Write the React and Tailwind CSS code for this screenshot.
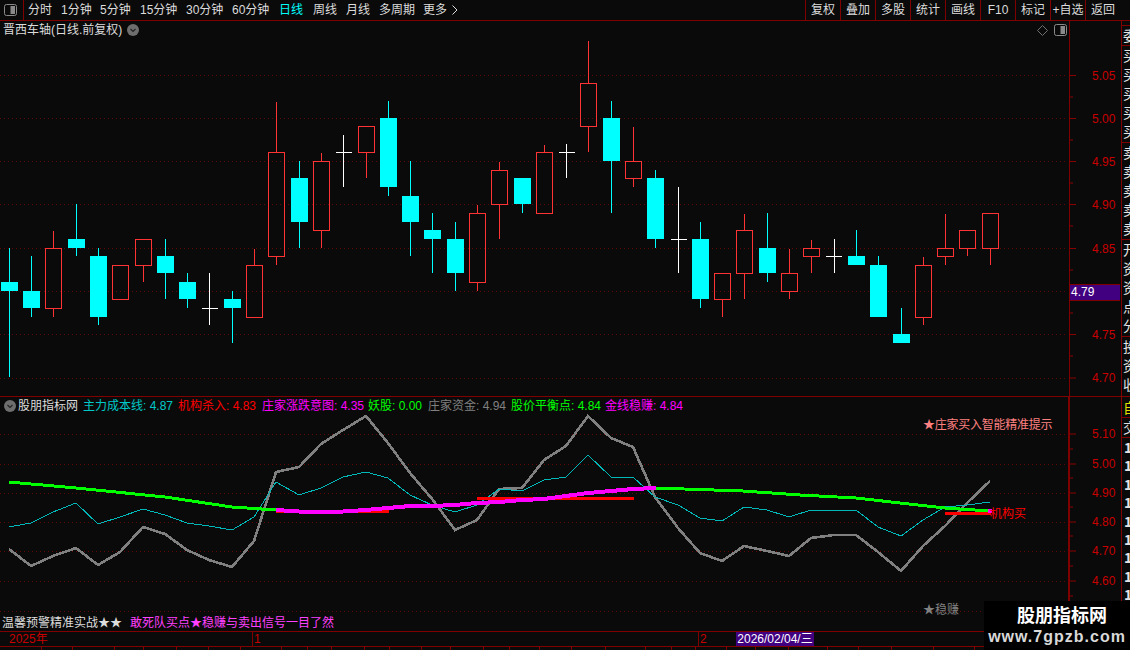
import React from "react";

const RED = "#ff3333";
const CY = "#00ffff";
const candles = [
  [9.5,248,282,291,377,"c"],[31.5,256,291,308,317,"c"],[53.5,231,248.5,308.5,317,"r"],[76.5,204,239,248,256,"c"],
  [98.5,248,256,317,325,"c"],[120.5,265,265.5,299.5,299,"r"],[143.5,239,239.5,265.5,282,"r"],[165.5,239,256,273,299,"c"],
  [187.5,273,282,299,308,"c"],[209.5,273,308,308,325,"w"],[232.5,291,299,308,343,"c"],[254.5,249,265.5,317.5,317,"r"],
  [276.5,102,152.5,256.5,265,"r"],[299.5,161,178,222,248,"c"],[321.5,153,161.5,230.5,248,"r"],[343.5,135,152,152,187,"w"],
  [366.5,126,126.5,152.5,178,"r"],[388.5,101,118,187,196,"c"],[410.5,161,196,222,256,"c"],[432.5,213,230,239,273,"c"],
  [455.5,222,239,273,291,"c"],[477.5,205,213.5,282.5,291,"r"],[499.5,162,170.5,204.5,239,"r"],[522.5,178,178,204,213,"c"],
  [544.5,145,152.5,213.5,213,"r"],[566.5,144,152,152,178,"w"],[588.5,41,83.5,126.5,152,"r"],[611.5,101,118,161,213,"c"],
  [633.5,127,161.5,178.5,187,"r"],[655.5,170,178,239,248,"c"],[678.5,187,239,239,273,"w"],[700.5,222,239,299,308,"c"],
  [722.5,273,273.5,299.5,317,"r"],[744.5,214,230.5,273.5,299,"r"],[767.5,213,248,273,282,"c"],[789.5,249,273.5,291.5,299,"r"],
  [811.5,240,248.5,256.5,273,"r"],[834,239,256,256,273,"w"],[856.5,230,256,265,265,"c"],[878.5,256,265,317,317,"c"],
  [901.5,308,334,343,343,"c"],[923.5,257,265.5,317.5,325,"r"],[945.5,214,248.5,256.5,265,"r"],[967.5,230,230.5,248.5,256,"r"],
  [990.5,213,213.5,248.5,265,"r"],
];

const gray = "9,549 31,566 53,556 76,548 98,565 120,552 143,527 165,534 187,550 209,560 232,567 254,541 276,472 299,467 321,444 343,430 366,416 388,443 410,473 433,500 455,530 477,520 499,489 522,488 544,460 566,446 588,416 611,438 633,447 655,497 678,528 700,553 722,561 744,546 767,551 789,556 811,538 834,535 856,535 878,552 901,571 923,546 945,526 967,503 990,481";
const teal = "9,527 31,523 53,512 76,503 98,524 120,517 143,509 165,515 187,523 209,526 232,530 254,517 276,482 299,495 321,488 343,477 366,472 388,478 410,495 432,505 455,512 477,505 499,489 522,491 544,480 566,477 588,455 611,477 633,477 655,497 678,505 700,518 722,521 744,507 767,510 789,517 811,510 834,511 856,510 878,527 901,536 923,520 945,507 967,505 990,502";
const greenA = "9,482 76,488 165,497 232,507 276,510";
const greenB = "655,488 743,491 800,495 856,498 900,503 945,508 990,511";
const magenta = "276,510 299,511.5 343,511.5 366,510 388,508 410,506 432,506 455,505 477,503 499,502 522,500 544,499 566,496 588,493 611,491 633,489 656,488";

const topLevels = [[75.5,"5.05"],[118.5,"5.00"],[161.5,"4.95"],[204.5,"4.90"],[248.5,"4.85"],[291.5,""],[334.5,"4.75"],[378,"4.70"]];
const lowLevels = [[434,"5.10"],[464,"5.00"],[493,"4.90"],[522,"4.80"],[551,"4.70"],[581,"4.60"],[611,""]];

const periods = [
  ["分时","w-[33px]",""],["1分钟","w-[39px]",""],["5分钟","w-[40px]",""],["15分钟","w-[46px]",""],["30分钟","w-[46px]",""],
  ["60分钟","w-[47px]",""],["日线","w-[34px]","text-[#00ffff]"],["周线","w-[33px]",""],["月线","w-[33px]",""],["多周期","w-[44px]",""],["更多","w-[29px]",""],
];
const tools = ["复权","叠加","多股","统计","画线","F10","标记","+自选","返回"];
const cells = [42,31,42,29,33,32,32,41,26,24,33,25,32,29,33,26,30,32,34,40,26,24,31,29,33,39,31,33,42,41,31];

function Candle({ d }) {
  const [x, hi, top, bot, lo, k] = d;
  if (k === "c")
    return (
      <g>
        <line x1={x} x2={x} y1={hi} y2={lo} stroke={CY} />
        <rect x={x - 8.5} y={top} width={17} height={bot - top} fill={CY} />
      </g>
    );
  if (k === "w")
    return (
      <g stroke="#ffffff">
        <line x1={x} x2={x} y1={hi} y2={lo} />
        <line x1={x - 8} x2={x + 8} y1={top + 0.5} y2={top + 0.5} />
      </g>
    );
  return (
    <g stroke={RED} fill="none">
      {hi < top && <line x1={x} x2={x} y1={hi} y2={top} />}
      {lo > bot && <line x1={x} x2={x} y1={bot} y2={lo} />}
      <rect x={x - 8} y={top} width={16} height={bot - top} />
    </g>
  );
}

function Grid({ levels }) {
  return levels.map(([y]) => (
    <line key={y} x1="0" x2="1067" y1={y} y2={y} stroke="#5c0606" strokeDasharray="1 3" />
  ));
}

function PanelIcon() {
  return (
    <svg width="13" height="12" viewBox="0 0 13 12">
      <rect x="0.5" y="0.5" width="12" height="11" rx="2" fill="none" stroke="#8a8a8a" />
      <rect x="6.5" y="2" width="4.5" height="8" fill="#8a8a8a" />
    </svg>
  );
}

function Chevron() {
  return (
    <svg width="12" height="12" viewBox="0 0 12 12">
      <circle cx="6" cy="6" r="6" fill="#6e6e6e" />
      <path d="M3.5 5 L6 7.5 L8.5 5" fill="none" stroke="#222" strokeWidth="1.2" />
    </svg>
  );
}

function Axis({ levels, minor }) {
  return (
    <div className="relative w-[51px] h-full">
      <svg className="absolute inset-0" width="51" height="100%">
        {levels.map(([y, , o]) => (
          <line key={y} x1="0" x2="6" y1={o} y2={o} stroke="#8a0000" />
        ))}
        {minor.map((y) => (
          <line key={y} x1="0" x2="3" y1={y} y2={y} stroke="#8a0000" />
        ))}
      </svg>
      {levels.filter((l) => l[1]).map(([y, t, o]) => (
        <span key={t} className="absolute left-[22px] text-[12px] leading-[14px] text-[#c80000]" style={{ top: o - 7 }}>
          {t}
        </span>
      ))}
    </div>
  );
}

function StripGroup({ chars, h }) {
  return (
    <div className={`${h} border-b border-[#800000] overflow-hidden pl-[1px] text-[14px] leading-[19px] text-[#e4e4e4] whitespace-nowrap`}>
      {chars.split("").map((c, i) => (
        <div key={i}>{c}</div>
      ))}
    </div>
  );
}

export default function App() {
  return (
    <div className="w-[1130px] h-[650px] overflow-hidden bg-[#0a0a0a] flex flex-col relative text-[12px] leading-[14px] text-[#dcdcdc] font-['Liberation_Sans','Noto_Sans_CJK_SC',sans-serif]">
      {/* top bar */}
      <div className="h-[21px] shrink-0 flex items-stretch border-b border-[#800000]">
        <div className="w-[24px] border-r border-[#800000] flex items-center justify-center pr-[3px]">
          <PanelIcon />
        </div>
        <div className="pl-[4px] flex items-center flex-1">
          {periods.map(([t, w, c]) => (
            <span key={t} className={`${w} ${c}`}>{t}</span>
          ))}
          <svg width="6" height="10" viewBox="0 0 6 10">
            <path d="M0.5 0.5 L5 5 L0.5 9.5" fill="none" stroke="#dcdcdc" />
          </svg>
        </div>
        <div className="flex">
          {tools.map((t) => (
            <div key={t} className="w-[35px] border-l border-[#800000] flex items-center justify-center whitespace-nowrap">
              {t}
            </div>
          ))}
          <div className="w-[10px]"></div>
        </div>
      </div>

      <div className="flex-1 flex min-h-0">
        <div className="w-[1121px] flex flex-col shrink-0">
          {/* K-line pane */}
          <div className="h-[376px] shrink-0 flex border-b border-[#800000]">
            <div className="relative w-[1070px] border-r border-[#800000] box-content">
              <svg className="absolute inset-0" width="1070" height="375" viewBox="0 21 1070 375" shapeRendering="crispEdges">
                <Grid levels={topLevels} />
                {candles.map((d) => (
                  <Candle key={d[0]} d={d} />
                ))}
              </svg>
              <div className="relative flex items-center h-[17px] pl-[3px] gap-[5px]">
                <span>晋西车轴(日线.前复权)</span>
                <Chevron />
              </div>
              <div className="absolute top-[3px] right-[2px] flex items-center gap-[6px]">
                <svg width="11" height="11" viewBox="0 0 11 11">
                  <path d="M5.5 0.5 L10.5 5.5 L5.5 10.5 L0.5 5.5 Z" fill="none" stroke="#707070" />
                </svg>
                <PanelIcon />
              </div>
            </div>
            <div className="relative">
              <Axis
                levels={topLevels.map(([y, t]) => [y, t, y - 21])}
                minor={[97, 140, 183, 226, 270, 313, 356].map((y) => y - 21)}
              />
              <div className="absolute left-0 top-[263px] w-[50px] h-[17px] bg-[#400080] border-y border-[#800000] text-white pl-[1px] text-[12px] leading-[15px]">
                4.79
              </div>
            </div>
          </div>

          {/* indicator pane */}
          <div className="h-[234px] shrink-0 flex">
            <div className="relative w-[1070px] border-r-2 border-[#800000] box-content flex flex-col">
              <svg className="absolute inset-0" width="1070" height="234" viewBox="0 397 1070 234" shapeRendering="crispEdges">
                <Grid levels={lowLevels} />
                <polyline points={gray} fill="none" stroke="#808080" strokeWidth="2.6" />
                <polyline points={teal} fill="none" stroke="#00b8b8" />
                <line x1="276" x2="389" y1="511.5" y2="511.5" stroke="#ff0000" strokeWidth="3" />
                <line x1="477" x2="634" y1="498.5" y2="498.5" stroke="#ff0000" strokeWidth="3" />
                <line x1="945" x2="991" y1="513" y2="513" stroke="#ff0000" strokeWidth="3" />
                <polyline points={greenA} fill="none" stroke="#00ff00" strokeWidth="3" />
                <polyline points={greenB} fill="none" stroke="#00ff00" strokeWidth="3" />
                <polyline points={magenta} fill="none" stroke="#ff00ff" strokeWidth="4" />
                <rect x="988" y="509" width="4" height="4" fill="#ff00ff" />
              </svg>
              <div className="relative flex items-center h-[17px] whitespace-nowrap">
                <span className="w-[18px] flex justify-center pl-[1px]"><Chevron /></span>
                <span className="w-[65px]">股朋指标网</span>
                <span className="w-[95px] text-[#00c8c8]">主力成本线: 4.87</span>
                <span className="w-[84px] text-[#ff0000]">机构杀入: 4.83</span>
                <span className="w-[106px] text-[#ff00ff]">庄家涨跌意图: 4.35</span>
                <span className="w-[60px] text-[#00ff00]">妖股: 0.00</span>
                <span className="w-[83px] text-[#808080]">庄家资金: 4.94</span>
                <span className="w-[94px] text-[#00ff00]">股价平衡点: 4.84</span>
                <span className="text-[#ff00ff]">金线稳赚: 4.84</span>
              </div>
              <span className="absolute left-[923px] top-[21px] text-[#ff8080] whitespace-nowrap tracking-[-0.25px]">★庄家买入智能精准提示</span>
              <span className="absolute left-[990px] top-[110px] text-[#ff0000] whitespace-nowrap">机构买</span>
              <span className="absolute left-[923px] top-[206px] text-[#808080] whitespace-nowrap">★稳赚</span>
              <div className="relative mt-auto flex items-center h-[16px] pl-[2px] whitespace-nowrap">
                <span className="w-[128px]">温馨预警精准实战★★</span>
                <span className="text-[#ff40ff]">敢死队买点★稳赚与卖出信号一目了然</span>
              </div>
            </div>
            <Axis
              levels={lowLevels.map(([y, t]) => [y, t, y - 397])}
              minor={[449, 478, 507, 536, 566, 596].map((y) => y - 397)}
            />
          </div>

          {/* time bar */}
          <div className="h-[16px] shrink-0 flex border-y border-[#800000] text-[#c80000] relative">
            <div className="w-[253px] border-r border-[#800000] pl-[9px]">2025年</div>
            <div className="w-[446px] border-r border-[#800000] pl-[1px]">1</div>
            <div className="pl-[1px]">2</div>
            <div className="absolute left-[736px] top-0 w-[78px] h-full bg-[#400080] text-white text-center">2026/02/04/三</div>
          </div>
          <div className="flex-1 flex overflow-hidden">
            {cells.map((w, i) => (
              <div key={i} className="h-full border-r border-[#800000] shrink-0" style={{ width: w }}></div>
            ))}
          </div>
        </div>

        {/* right strip */}
        <div className="flex-1 border-l border-[#800000] flex flex-col overflow-hidden font-['Noto_Sans_CJK_SC',sans-serif]">
          <div className="h-[5px] border-b border-[#800000]"></div>
          <StripGroup chars="委" h="h-[20px]" />
          <StripGroup chars="买买买买买" h="h-[97px]" />
          <StripGroup chars="卖卖卖卖卖" h="h-[97px]" />
          <StripGroup chars="开资资点分" h="h-[97px]" />
          <StripGroup chars="投资收" h="h-[60px]" />
          <div className="h-[21px] border-b border-[#800000] pl-[1px] text-[14px] leading-[20px] text-[#e0e000]">自</div>
          <div className="h-[20px] border-b border-[#800000] pl-[1px] text-[14px] leading-[19px]">交</div>
          <div className="pl-[2px] text-[14px] leading-[18.4px] font-bold text-[#e4e4e4]">
            {[0, 1, 2, 3, 4, 5, 6, 7, 8].map((i) => (
              <div key={i}>1</div>
            ))}
          </div>
        </div>
      </div>

      {/* site badge */}
      <div className="absolute right-0 bottom-0 w-[146px] h-[49px] bg-black flex flex-col items-center pt-[1px] font-['Noto_Sans_CJK_SC',sans-serif]">
        <span className="ml-[10px] text-[18px] leading-[24px] font-bold text-white">股朋指标网</span>
        <span className="mt-[1px] text-[16px] leading-[20px] font-bold text-[#d8d8d8] tracking-[1px] font-['Liberation_Sans']">www.7gpzb.com</span>
      </div>
    </div>
  );
}
